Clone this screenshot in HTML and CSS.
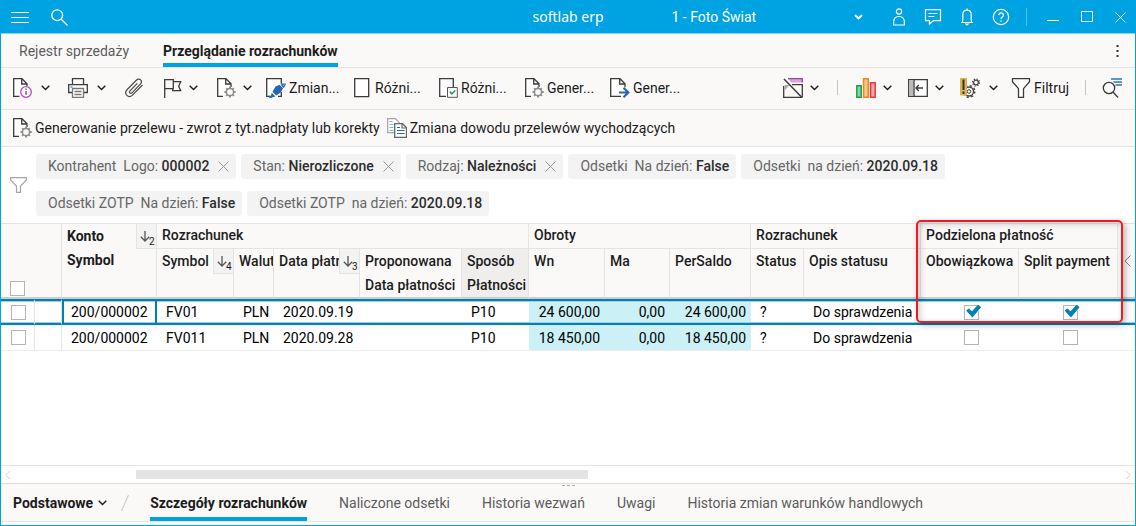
FILE: index.html
```html
<!DOCTYPE html>
<html lang="pl">
<head>
<meta charset="utf-8">
<meta name="viewport" content="width=device-width, initial-scale=1">
<title>softlab erp</title>
<link rel="stylesheet" href="styles.css">
</head>
<body>
<svg class="sprite" aria-hidden="true">
  <symbol id="chev" viewBox="0 0 9 6"><path d="M.7.8 4.5 4.6 8.300.8" fill="none" stroke="currentColor" stroke-width="1.400"/></symbol>
  <symbol id="cross" viewBox="0 0 11 11"><path d="M.5.5l10 10M10.500.5l-10 10" fill="none" stroke="currentColor"/></symbol>
  <symbol id="docgear" viewBox="0 0 20 20">
    <path d="M1.500.5H10l5 5V10H8.500l-1 8.500h-6z" fill="#fff"/>
    <path d="M7 18.300H1.700V.7H10l5 5V9M9.700 1v5h5" fill="none" stroke="#3b3b3b" stroke-width="1.300"/>
    <g fill="none" stroke="#8d8d8d"><circle cx="14" cy="14" r="3.600" stroke-width="1.500"/><path d="M14 8.500V10M14 18v1.600M8.500 14H10M18 14h1.700M10.200 10.200l1.200 1.200M16.700 16.700l1.200 1.200M17.800 10.200l-1.200 1.200M11.300 16.700l-1.200 1.200" stroke-width="2"/></g>
  </symbol>
  <symbol id="sort" viewBox="0 0 10 11"><path d="M5 0v10M.8 5.800L5 10l4.200-4.200" fill="none" stroke="#555" stroke-width="1.300"/></symbol>
</svg>
<div class="window">
  <header class="titlebar">
    <div class="titlebar-left">
      <button class="bare" aria-label="Menu"><svg width="18" height="12" viewBox="0 0 18 12"><path d="M0 1.500h18M0 6.500h18M0 11.500h18" stroke="#fff"/></svg></button>
      <button class="bare" aria-label="Szukaj"><svg width="17" height="17" viewBox="0 0 17 17" fill="none" stroke="#fff" stroke-width="1.300"><circle cx="6.200" cy="6.200" r="5.400"/><path d="M10 10l6.500 6.500"/></svg></button>
    </div>
    <div class="brand">softlab erp</div>
    <div class="titlebar-right">
      <div class="company">
        <select aria-label="Firma"><option>1 - Foto Świat</option></select>
        <svg class="company-chev" width="9" height="6" viewBox="0 0 9 6"><path d="M1 1l3.500 3.400L8 1" fill="none" stroke="#fff" stroke-width="2"/></svg>
      </div>
      <div class="titlebar-icons">
        <button class="bare" aria-label="Użytkownik"><svg width="18" height="18" viewBox="0 0 18 18" fill="none" stroke="#fff" stroke-width="1.200"><circle cx="9" cy="3.500" r="2.600"/><path d="M3.600 17v-2.500c0-4 2-6 5.400-6s5.400 2 5.400 6V17z"/></svg></button>
        <button class="bare" aria-label="Wiadomości"><svg width="18" height="18" viewBox="0 0 18 18" fill="none" stroke="#fff" stroke-width="1.200"><path d="M1.500 1.600h15v11H9.500L5.500 16v-3.400h-4zM4.500 5.500h9M4.500 8.500h6"/></svg></button>
        <button class="bare" aria-label="Powiadomienia"><svg width="18" height="18" viewBox="0 0 18 18" fill="none" stroke="#fff" stroke-width="1.200"><path d="M3 14.500h12M4.500 14c.5-2 .3-4 .3-7C4.800 4 6.500 2.200 9 2.200S13.200 4 13.200 7c0 3-.2 5 .3 7M9 .5v2M7.500 15.500l1.500 1.500 1.500-1.500"/></svg></button>
        <button class="bare" aria-label="Pomoc"><svg width="18" height="18" viewBox="0 0 18 18" fill="none" stroke="#fff" stroke-width="1.200"><circle cx="9" cy="9" r="7.700"/><path d="M6.700 7.200c0-3 4.700-3 4.700 0 0 1.800-2.400 1.800-2.400 3.800"/><path d="M9 12.300v1.500"/></svg></button>
      </div>
      <div class="window-buttons">
        <button class="bare" aria-label="Minimalizuj"><svg width="12" height="12" viewBox="0 0 12 12"><path d="M0 9.500h12" stroke="#fff"/></svg></button>
        <button class="bare" aria-label="Maksymalizuj"><svg width="12" height="12" viewBox="0 0 12 12"><path d="M.5.5h11v10H.5z" fill="none" stroke="#fff"/></svg></button>
        <button class="bare" aria-label="Zamknij"><svg width="11" height="11" color="#fff"><use href="#cross"/></svg></button>
      </div>
    </div>
  </header>

  <nav class="tabs">
    <a class="tab" href="#rejestr">Rejestr sprzedaży</a>
    <a class="tab tab-active" href="#rozrachunki" aria-current="page">Przeglądanie rozrachunków</a>
    <button class="bare more" aria-label="Więcej"><svg width="3" height="12" viewBox="0 0 3 12" fill="#333"><path d="M.5 0h2v2h-2zM.5 5h2v2h-2zM.5 10h2v2h-2z"/></svg></button>
  </nav>

  <div class="toolbar">
    <div class="tools">
      <button class="tool" aria-label="Informacje">
        <svg width="20" height="20" viewBox="0 0 20 20"><path d="M1.500.5H10l5 5V18h-13z" fill="#fff"/><path d="M7.500 18.300H1.700V.7H10l5 5V8M9.700 1v5h5" fill="none" stroke="#3b3b3b" stroke-width="1.300"/><circle cx="14" cy="14" r="5.300" fill="#fff" stroke="#ab4fb5" stroke-width="1.300"/><path d="M14 13v4M14 10.500V12" stroke="#ab4fb5" stroke-width="1.500"/></svg>
        <svg class="chev"><use href="#chev"/></svg>
      </button>
      <button class="tool" aria-label="Drukuj">
        <svg width="20" height="20" viewBox="0 0 20 20" fill="none" stroke="#3b3b3b" stroke-width="1.300"><path d="M4.500 6V.7h11V6" fill="#fff"/><path d="M4 14.500H.7V6.600h18.600v7.900H16" fill="#fff"/><path d="M4.500 10.500h11v8.800h-11z" fill="#fff" stroke="#777"/><path d="M6.500 13.500h7M6.500 16.500h7" stroke="#777"/><path d="M2.500 9h2" stroke="#2c86d6"/></svg>
        <svg class="chev"><use href="#chev"/></svg>
      </button>
      <button class="tool" aria-label="Załączniki">
        <svg width="20" height="20" viewBox="0 0 20 20" fill="none" stroke="#4a4a4a" stroke-width="1.200"><path d="M13.300 5.300L6 12.800c-1.400 1.500.5 3.500 2 2l8.300-8.600c3-3.200-.8-7-4-3.900L3.200 11.500c-4 4.400 1.300 9.600 5.500 5.400L18.500 7"/></svg>
      </button>
      <button class="tool tool-tight" aria-label="Flaga">
        <svg width="20" height="20" viewBox="0 0 20 20" fill="none" stroke="#3b3b3b" stroke-width="1.300"><path d="M2.700 20V1.700h8.600v9H2.700M11.300 3.700h7.400l-2 4.500 2 4.500h-8v-2"/></svg>
        <svg class="chev"><use href="#chev"/></svg>
      </button>
      <button class="tool tool-tight" aria-label="Operacje">
        <svg width="20" height="20"><use href="#docgear"/></svg>
        <svg class="chev"><use href="#chev"/></svg>
      </button>
    </div>
    <div class="labelled">
      <button class="action">
        <svg width="20" height="20" viewBox="0 0 20 20"><path d="M.7.7h14.600v17.600H.7z" fill="#fff"/><path d="M5 18.300H.7V.7h14.600v5M15.300 14v4.300H12" fill="none" stroke="#3b3b3b" stroke-width="1.300"/><path d="M4.500 19.700l1.200-5 3.800 3.800zM6.500 13.700l3-5.200 4-1.800 3.500 3.500-2 4-4.800 3.300zM14.500 6.500l2.200-.5.5 1.800 2.500-1.300-1.300 2.700-1 .8z" fill="#2467b3"/><path d="M3 17.500l3.500 2.300H2.800zM16 5.500h3.800v1.200H16z" fill="#2467b3"/></svg>
        <span>Zmian...</span>
      </button>
      <button class="action">
        <svg width="20" height="20" viewBox="0 0 20 20"><path d="M2.700.7h14v18h-14z" fill="#fff" stroke="#3b3b3b" stroke-width="1.300"/></svg>
        <span>Różni...</span>
      </button>
      <button class="action">
        <svg width="20" height="20" viewBox="0 0 20 20"><path d="M1.700.7h13.600v17.600H1.700z" fill="#fff"/><path d="M8 18.300H1.700V.7h13.600V9" fill="none" stroke="#3b3b3b" stroke-width="1.300"/><path d="M9.500 9.500h9.800v9.800H9.500z" fill="#fff" stroke="#555"/><path d="M11.800 13.500l2 2.300 3.400-3.300" fill="none" stroke="#239a62" stroke-width="1.600"/></svg>
        <span>Różni...</span>
      </button>
      <button class="action">
        <svg width="20" height="20"><use href="#docgear"/></svg>
        <span>Gener...</span>
      </button>
      <button class="action">
        <svg width="20" height="20" viewBox="0 0 20 20"><path d="M.7.7H10l5 5v12.600H.7z" fill="#fff"/><path d="M11 18.300H.7V.7H10l5 5V9M9.700 1v5h5" fill="none" stroke="#3b3b3b" stroke-width="1.300"/><path d="M9 14.500h9.500M13.500 9.800l4.800 4.700-4.800 4.700" fill="none" stroke="#2467b3" stroke-width="2.200"/></svg>
        <span>Gener...</span>
      </button>
    </div>
    <div class="view-tools">
      <button class="tool tool-tight" aria-label="Ukryj wykres">
        <svg width="20" height="20" viewBox="0 0 20 20"><path d="M5 .5h14.500v4H8z" fill="#d9a7dc"/><path d="M5 .7h14.300v3.800" fill="none" stroke="#8e4b94" stroke-width="1.300"/><path d="M10 7h9v12z" fill="#fff"/><path d="M.7 8v11.300h18.600M9 6.700h10.300v12.600" fill="none" stroke="#3b3b3b" stroke-width="1.300"/><path d="M1.500 7h5L2 12z" fill="#aaa"/><path d="M1 1l17.500 18" stroke="#3b3b3b" stroke-width="1.500"/></svg>
        <svg class="chev"><use href="#chev"/></svg>
      </button>
      <span class="divider"></span>
      <button class="tool tool-tight" aria-label="Wykres">
        <svg width="20" height="20" viewBox="0 0 20 20" stroke-width="1.500"><path d="M.8 7.800h4.400v11.400H.8z" fill="#8ed0a4" stroke="#1ba24d"/><path d="M7.600.8h4.600v18.400H7.600z" fill="#fbc98a" stroke="#ee8322"/><path d="M14.600 4.800h4.600v14.400h-4.600z" fill="#f3a5a7" stroke="#e43c40"/></svg>
        <svg class="chev"><use href="#chev"/></svg>
      </button>
      <button class="tool tool-tight" aria-label="Panel">
        <svg width="20" height="20" viewBox="0 0 20 20" fill="none" stroke="#3b3b3b" stroke-width="1.300"><path d="M.7 1.700h18.600v16.600H.7z" fill="#fff"/><path d="M1.300 2.300h4v15.400h-4z" fill="#bbb" stroke="none"/><path d="M6 2v16M8 10h7M10.800 7L8 10l2.800 3"/></svg>
        <svg class="chev"><use href="#chev"/></svg>
      </button>
      <button class="tool" aria-label="Ustawienia ostrzeżeń">
        <svg width="20" height="20" viewBox="0 0 20 20" fill="none"><circle cx="9" cy="13.500" r="4.500" stroke="#444" stroke-width="1.300"/><circle cx="9" cy="13.500" r="5.800" stroke="#444" stroke-width="1.400" stroke-dasharray="2.200 2.350"/><circle cx="9" cy="13.500" r="1.800" stroke="#444"/><circle cx="16" cy="4.500" r="2.400" stroke="#444" stroke-width="1.200"/><circle cx="16" cy="4.500" r="3.500" stroke="#444" stroke-width="1.100" stroke-dasharray="1.300 1.450"/><path d="M0 0h7v17.500H0z" fill="#dfb44f"/><path d="M2.500 1.500h2V12h-2zM2.500 13.500h2V16h-2z" fill="#333"/></svg>
        <svg class="chev"><use href="#chev"/></svg>
      </button>
      <button class="action filter-action">
        <svg width="20" height="20" viewBox="0 0 20 20"><path d="M1.500.7h17v3l-6 7v8.600h-5v-8.600l-6-7z" fill="#fff" stroke="#3b3b3b" stroke-width="1.300"/></svg>
        <span>Filtruj</span>
      </button>
      <span class="divider"></span>
      <button class="tool" aria-label="Znajdź">
        <svg width="20" height="20" viewBox="0 0 20 20" fill="none"><path d="M9 1h11M11.500 4H20M13.500 7H20" stroke="#2779bd" stroke-width="1.500"/><circle cx="7" cy="10" r="5.700" stroke="#3b3b3b" stroke-width="1.300"/><path d="M11 14l5 5.500" stroke="#3b3b3b" stroke-width="1.300"/></svg>
      </button>
    </div>
  </div>

  <div class="toolbar toolbar-second">
    <button class="action"><svg width="20" height="20"><use href="#docgear"/></svg><span>Generowanie przelewu - zwrot z tyt.nadpłaty lub korekty</span></button>
    <button class="action">
      <svg width="20" height="20" viewBox="0 0 20 20" fill="none"><path d="M.7.7h7.600l4 4v10H.7z" fill="#fff" stroke="#a2a2a2" stroke-width="1.200"/><path d="M2.500 3.500h3M2.500 6.500h4M2.500 9.500h4M2.500 12.500h4" stroke="#7fb0dc"/><path d="M7.700 5.700h7.800l4 4v9.600H7.700z" fill="#fff" stroke="#666" stroke-width="1.300"/><path d="M15 6v4h4" stroke="#666" stroke-width="1.200"/><path d="M10 9.500h3M10 12.500h7.500M10 15.500h7.500" stroke="#2467b3" stroke-width="1.200"/></svg>
      <span>Zmiana dowodu przelewów wychodzących</span>
    </button>
  </div>

  <section class="filters" aria-label="Filtry">
    <svg width="17" height="16" viewBox="0 0 17 16"><path d="M.7.7h15.600v2.500L10.500 9v6.300h-4V9L.7 3.200z" fill="none" stroke="#a5a5a5" stroke-width="1.200"/></svg>
    <div class="chips">
      <span class="chip"><span>Kontrahent  Logo: <b>000002</b></span><button class="bare" aria-label="Usuń filtr Logo"><svg width="11" height="11"><use href="#cross"/></svg></button></span>
      <span class="chip"><span>Stan: <b>Nierozliczone</b></span><button class="bare" aria-label="Usuń filtr Stan"><svg width="11" height="11"><use href="#cross"/></svg></button></span>
      <span class="chip"><span>Rodzaj: <b>Należności</b></span><button class="bare" aria-label="Usuń filtr Rodzaj"><svg width="11" height="11"><use href="#cross"/></svg></button></span>
      <span class="chip"><span>Odsetki  Na dzień: <b>False</b></span></span>
      <span class="chip"><span>Odsetki  na dzień: <b>2020.09.18</b></span></span>
      <span class="chip"><span>Odsetki ZOTP  Na dzień: <b>False</b></span></span>
      <span class="chip"><span>Odsetki ZOTP  na dzień: <b>2020.09.18</b></span></span>
    </div>
  </section>

  <main class="grid-area">
    <table class="grid">
      <colgroup>
        <col class="c-check"><col class="c-mark"><col class="c-account"><col class="c-symbol"><col class="c-currency"><col class="c-date"><col class="c-proposed"><col class="c-method"><col class="c-wn"><col class="c-ma"><col class="c-saldo"><col class="c-status"><col class="c-desc"><col class="c-required"><col class="c-split"><col>
      </colgroup>
      <thead>
        <tr class="head-groups">
          <th class="head-check" rowspan="2" colspan="2"><input type="checkbox" aria-label="Zaznacz wszystkie"></th>
          <th class="head-account" rowspan="2"><div class="head"><span class="head-text">Konto<br>Symbol</span><span class="sort"><svg width="10" height="11"><use href="#sort"/></svg><small>2</small></span></div></th>
          <th class="group" colspan="5">Rozrachunek</th>
          <th class="group" colspan="3">Obroty</th>
          <th class="group" colspan="2">Rozrachunek</th>
          <th class="group marked" colspan="2">Podzielona płatność<span class="callout"></span></th>
          <th class="head-last" rowspan="2"><button class="bare" aria-label="Rozwiń kolumny"><svg width="7" height="12" viewBox="0 0 7 12"><path d="M6.500.5L1 6l5.500 5.500" fill="none" stroke="#888"/></svg></button></th>
        </tr>
        <tr class="head-columns">
          <th><div class="head"><span class="head-text">Symbol</span><span class="sort"><svg width="10" height="11"><use href="#sort"/></svg><small>4</small></span></div></th>
          <th><div class="head"><span class="head-text">Waluta</span></div></th>
          <th><div class="head"><span class="head-text">Data płatności</span><span class="sort"><svg width="10" height="11"><use href="#sort"/></svg><small>3</small></span></div></th>
          <th>Proponowana<br>Data płatności</th>
          <th class="head-hover">Sposób<br>Płatności</th>
          <th>Wn</th>
          <th>Ma</th>
          <th>PerSaldo</th>
          <th>Status</th>
          <th>Opis statusu</th>
          <th>Obowiązkowa</th>
          <th>Split payment</th>
        </tr>
      </thead>
      <tbody>
        <tr class="selected">
          <td class="cell-check"><input type="checkbox" aria-label="Zaznacz FV01"></td><td class="cell-mark"></td><td class="cell-account">200/000002</td><td>FV01</td><td>PLN</td><td>2020.09.19</td><td></td><td>P10</td><td class="amount">24 600,00</td><td class="amount">0,00</td><td class="amount">24 600,00</td><td>?</td><td>Do sprawdzenia</td><td class="cell-flag"><input type="checkbox" aria-label="Obowiązkowa FV01" checked></td><td class="cell-flag"><input type="checkbox" aria-label="Split payment FV01" checked></td><td></td>
        </tr>
        <tr>
          <td class="cell-check"><input type="checkbox" aria-label="Zaznacz FV011"></td><td class="cell-mark"></td><td class="cell-account">200/000002</td><td>FV011</td><td>PLN</td><td>2020.09.28</td><td></td><td>P10</td><td class="amount">18 450,00</td><td class="amount">0,00</td><td class="amount">18 450,00</td><td>?</td><td>Do sprawdzenia</td><td class="cell-flag"><input type="checkbox" aria-label="Obowiązkowa FV011"></td><td class="cell-flag"><input type="checkbox" aria-label="Split payment FV011"></td><td></td>
        </tr>
      </tbody>
    </table>
  </main>

  <div class="scrollbar">
    <svg width="6" height="10" viewBox="0 0 6 10"><path d="M5 1L1 5l4 4" fill="none" stroke="#d5d5d5"/></svg>
    <div class="track"><div class="thumb"></div></div>
    <svg width="6" height="10" viewBox="0 0 6 10"><path d="M1 1l4 4-4 4" fill="none" stroke="#d5d5d5"/></svg>
  </div>

  <nav class="tabs details">
    <span class="grip"></span>
    <button class="bare details-menu">Podstawowe<svg class="chev"><use href="#chev"/></svg></button>
    <svg class="slash" width="8" height="16" viewBox="0 0 8 16"><path d="M7.500 0L.5 16" stroke="#ccc" stroke-width="1.200"/></svg>
    <a class="tab tab-active" href="#szczegoly" aria-current="page">Szczegóły rozrachunków</a>
    <a class="tab" href="#odsetki">Naliczone odsetki</a>
    <a class="tab" href="#wezwania">Historia wezwań</a>
    <a class="tab" href="#uwagi">Uwagi</a>
    <a class="tab" href="#warunki">Historia zmian warunków handlowych</a>
  </nav>
</div>
</body>
</html>
```
FILE: styles.css
```css
:root {
  --blue: #00a3e2;
  --deep: #0080b4;
  --panel: #faf9f8;
  --line: #e4e4e4;
}
* { box-sizing: border-box; }
body { margin: 0; font: 14px/20px Roboto, sans-serif; color: #1c1c1c; }
svg { display: block; flex: none; }
.sprite { position: absolute; width: 0; height: 0; }
button, select, input { font: inherit; color: inherit; }
.bare, .tool, .action { border: 0; padding: 0; background: none; cursor: pointer; }
.chev { width: 9px; height: 6px; }

.window { min-height: 100vh; display: flex; flex-direction: column; border: 1px solid var(--blue); background: #fff; }

.titlebar { display: grid; grid-template-columns: 1fr auto 1fr; align-items: center; height: 33px; background: var(--blue); border-bottom: 1px solid #8bd2ef; color: #fff; }
.titlebar-left { display: flex; align-items: center; gap: 22px; padding-left: 10px; }
.brand { font: 14px/20px "Noto Sans", sans-serif; }
.titlebar-right { display: flex; align-items: center; padding: 0 9px 0 68px; }
.company { position: relative; flex: 1; }
.company select { width: 100%; appearance: none; border: 0; padding: 0; background: none; color: #fff; outline: 0; }
.company-chev { position: absolute; right: 0; top: 7px; }
.titlebar-icons { display: flex; gap: 16px; margin-left: 27px; padding-right: 16px; border-right: 1px solid #4fc0ec; }
.window-buttons { display: flex; align-items: center; gap: 22px; margin-left: 20px; }

.tabs { display: flex; align-items: stretch; gap: 34px; height: 34px; padding: 0 16px 0 18px; background: var(--panel); border-bottom: 1px solid var(--line); }
.tab { display: flex; align-items: center; border-bottom: 4px solid transparent; padding-top: 4px; color: #5c5c5c; text-decoration: none; white-space: nowrap; }
.tab-active { color: #1c1c1c; font-weight: 700; border-color: var(--blue); }
.more { margin-left: auto; }

.toolbar { display: flex; align-items: center; height: 42px; padding: 0 13px 2px 11px; background: var(--panel); border-bottom: 1px solid var(--line); }
.tools { display: flex; gap: 18px; margin-right: 14px; }
.tool { display: flex; align-items: center; gap: 9px; }
.tool-tight { gap: 7px; }
.labelled { display: flex; }
.action { display: flex; align-items: center; gap: 3px; white-space: nowrap; }
.labelled .action { width: 86px; }
.view-tools { display: flex; align-items: center; gap: 16px; margin-left: auto; }
.filter-action { margin-left: -3px; }
.divider { width: 1px; height: 15px; background: #c4c4c4; }
.divider:first-of-type { margin: 0 2px; }
.toolbar-second { height: 37px; gap: 7px; padding: 0 11px; }

.filters { display: flex; align-items: center; gap: 9px; padding: 7px 9px; border-bottom: 1px solid var(--line); }
.chips { display: flex; flex-wrap: wrap; gap: 12px 5px; }
.chip { display: flex; align-items: center; gap: 9px; height: 25px; padding: 0 7px 1px 12px; border-radius: 3px; background: #f3f3f3; color: #666; white-space: pre; }
.chip b { font-weight: 500; color: #2c2c2c; }
.chip .bare { color: #999; }

.grid-area { flex: 1; }
.grid { width: 100%; table-layout: fixed; border-collapse: separate; border-spacing: 0; }
.c-check { width: 34px; }
.c-mark { width: 27px; }
.c-account { width: 95px; }
.c-symbol { width: 77px; }
.c-currency { width: 40px; }
.c-date { width: 86px; }
.c-proposed { width: 102px; }
.c-method { width: 67px; }
.c-wn { width: 76px; }
.c-ma { width: 65px; }
.c-saldo { width: 81px; }
.c-status { width: 53px; }
.c-desc { width: 117px; }
.c-required { width: 98px; }
.c-split { width: 99px; }
.grid th { padding: 0 0 0 5px; text-align: left; vertical-align: top; font-weight: 500; line-height: 24px; white-space: nowrap; background: var(--panel); border-right: 1px solid var(--line); border-bottom: 2px solid #cfcccc; }
.grid .group { height: 25px; line-height: 23px; border-bottom: 1px solid var(--line); }
.head-columns th { height: 50px; }
.grid .head-account { font-weight: 700; }
.grid .head-check { height: 75px; padding: 0 0 1px 9px; vertical-align: bottom; line-height: 15px; }
.grid .head-last { padding: 31px 0 0 6px; border-right: 0; line-height: 12px; }
.grid .head-hover { background: #efeeed; }
.head { display: flex; align-items: flex-start; }
.head-text { flex: 1; overflow: hidden; }
.sort { display: flex; flex: none; width: 20px; height: 25px; padding: 7px 0 0 3px; background: #f3f3f3; border-left: 1px solid var(--line); border-bottom: 1px solid var(--line); }
.sort svg { margin-right: -1px; }
.sort small { font-size: 10px; line-height: 22px; font-weight: 400; }
.grid td { height: 26px; padding: 0 4px 0 9px; border-bottom: 1px solid #ececec; white-space: nowrap; color: #000; }
.grid .cell-check { padding: 0 0 0 10px; border-right: 1px solid var(--line); }
.grid .cell-mark { border-right: 1px solid var(--line); }
.grid .amount { padding-right: 5px; text-align: right; background: #cbf0f6; }
.grid .cell-flag { padding: 0 0 0 3px; text-align: center; }
.grid .cell-check, .grid .cell-flag { line-height: 15px; }
.grid .selected td { border-top: 2px solid var(--deep); border-bottom: 2px solid var(--deep); box-shadow: inset 0 1px #9fcfe2, inset 0 -1px #9fcfe2; }
.grid .selected .cell-account { box-shadow: inset 2px 0 var(--deep), inset -2px 0 var(--deep), inset 0 1px #9fcfe2, inset 0 -1px #9fcfe2; }

.grid input { appearance: none; position: relative; display: inline-block; width: 15px; height: 15px; margin: 0; border: 1px solid #b4b4b4; background: #fff; vertical-align: top; }
.grid input:checked::before, .grid input:checked::after { content: ""; position: absolute; left: 1px; top: -1px; width: 15px; height: 13px; background: var(--deep); clip-path: polygon(0 47%, 18% 30%, 40% 52%, 80% 0, 100% 22%, 42% 100%); }
.grid input:checked::before { left: 1px; top: -3px; width: 17px; height: 15px; background: #fff; }

.marked { position: relative; }
.callout { position: absolute; z-index: 1; left: -5px; right: -6px; top: -4px; height: 103px; border: 2px solid #ed1c24; border-radius: 5px; box-shadow: 2px 2px 6px rgba(0, 0, 0, .3), inset 2px 2px 6px rgba(0, 0, 0, .2); pointer-events: none; }

.scrollbar { display: flex; align-items: center; gap: 7px; height: 19px; padding: 0 4px; border-top: 1px solid var(--line); border-bottom: 1px solid #dcdcdc; }
.track { flex: 1; padding-left: 118px; }
.thumb { width: 46%; height: 9px; background: #e4e4e4; }

.details { position: relative; gap: 32px; height: 38px; padding: 0 12px; margin-bottom: 3px; }
.details-menu { display: flex; align-items: center; gap: 5px; font-weight: 700; }
.slash { align-self: center; margin: 0 -11px 0 -18px; }
.grip { position: absolute; left: 50%; top: 1px; width: 13px; margin-left: -6px; border-top: 1px dashed #aaa; }
```
